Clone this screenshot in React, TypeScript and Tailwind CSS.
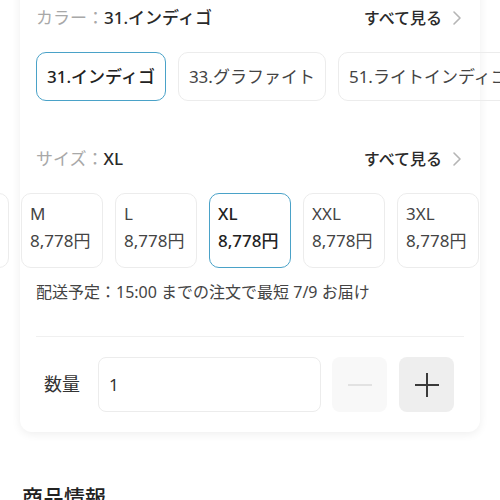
import React from 'react';

const colors = ['31.インディゴ', '33.グラファイト', '51.ライトインディゴ'];
const sizes = ['S', 'M', 'L', 'XL', 'XXL', '3XL'];

const Chevron = () => (
  <svg width="10" height="16" viewBox="0 0 10 16" fill="none" stroke="#b5b5b5" strokeWidth="1.6" strokeLinecap="round" strokeLinejoin="round">
    <path d="M2 2l6 6-6 6" />
  </svg>
);

// full-width colon kept at one em, centred, like the reference
const Colon = () => <span className="inline-block w-[1em] text-center">：</span>;

const Header: React.FC<{ label: string; value: string }> = ({ label, value }) => (
  <div className="flex items-center justify-between h-9">
    <div className="text-[17px]">
      <span className="text-[#a8a8a8]">{label}<Colon /></span>
      <span className="text-[#2a2a2a] font-medium">{value}</span>
    </div>
    <div className="flex items-center gap-2.5 pr-0.5">
      <span className="text-[16px] text-[#2a2a2a] font-medium">すべて見る</span>
      <Chevron />
    </div>
  </div>
);

export default function App() {
  return (
    <div className="w-[500px] h-[500px] overflow-hidden bg-white" style={{ fontFamily: '"Noto Sans", "Noto Sans CJK JP", sans-serif' }}>
      <div className="mx-5 -mt-5 pt-5 px-4 pb-5 bg-white rounded-b-xl shadow-[0_2px_10px_rgba(0,0,0,0.07)]">
        {/* Color */}
        <Header label="カラー" value="31.インディゴ" />
        <div className="-mx-9 mt-4 overflow-hidden">
          <div className="flex gap-3 pl-9">
            {colors.map((c, i) => (
              <div
                key={c}
                className={
                  'shrink-0 h-[49px] px-[10px] flex items-center rounded-[10px] border text-[17px] ' +
                  (i === 0 ? 'border-[#4aa2c8] text-[#222] font-medium' : 'border-[#ececec] text-[#444]')
                }
              >
                {c}
              </div>
            ))}
          </div>
        </div>

        {/* Size */}
        <div className="mt-[40px]">
          <Header label="サイズ" value="XL" />
        </div>
        <div className="-mx-9 mt-[16px] overflow-hidden">
          <div className="flex gap-3 ml-[-73px]">
            {sizes.map(s => {
              const sel = s === 'XL';
              return (
                <div
                  key={s}
                  className={
                    'shrink-0 w-[82px] h-[75px] pl-[8px] pt-[9px] rounded-[10px] border flex flex-col gap-[5px] ' +
                    (sel ? 'border-[#4aa2c8] text-[#222] font-medium' : 'border-[#ececec] text-[#444]')
                  }
                >
                  <span className="text-[17px] leading-[22px]">{s}</span>
                  <span className="text-[17px] leading-[22px]">8,778円</span>
                </div>
              );
            })}
          </div>
        </div>

        {/* Shipping */}
        <div className="mt-[13px] text-[16px] text-[#444] leading-[22px]">
          配送予定<Colon />15:00 までの注文で最短 7/9 お届け
        </div>

        <div className="mt-[33px] border-t border-[#f0f0f0]" />

        {/* Quantity */}
        <div className="mt-5 flex items-center">
          <span className="w-[62px] pl-2 text-[18px] text-[#333]">数量</span>
          <div className="w-[223px] h-[55px] rounded-lg border border-[#ececec] flex items-center pl-[10px] text-[17px] text-[#333]">1</div>
          <button type="button" className="ml-[11px] w-[55px] h-[55px] rounded-lg bg-[#f8f8f8] flex items-center justify-center">
            <svg width="26" height="26" viewBox="0 0 26 26" stroke="#e2e2e2" strokeWidth="2">
              <path d="M1 13h24" />
            </svg>
          </button>
          <button type="button" className="ml-3 w-[55px] h-[55px] rounded-lg bg-[#eeeeee] flex items-center justify-center">
            <svg width="26" height="26" viewBox="0 0 26 26" stroke="#3a3a3a" strokeWidth="2">
              <path d="M1 13h24M13 1v24" />
            </svg>
          </button>
        </div>
      </div>

      <div className="mt-[50px] px-[22px] text-[21px] font-medium text-[#222]">商品情報</div>
    </div>
  );
}
